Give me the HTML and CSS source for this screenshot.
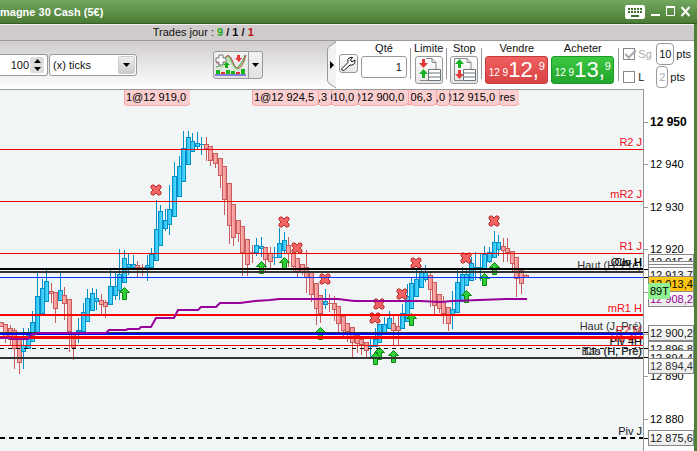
FILE: index.html
```html
<!DOCTYPE html>
<html lang="fr">

<head>
    <meta charset="UTF-8">
    <title>Allemagne 30 Cash (5€)</title>
    <link rel="stylesheet" href="styles.css">
</head>

<body>
    <div class="window">
        <header class="titlebar">
            <h1>magne 30 Cash (5€)</h1>
            <div class="window-buttons">
                <button aria-label="Clavier">
                    <svg width="20" height="14" viewBox="0 0 20 14">
                        <rect width="20" height="14" rx="2" fill="#fff" />
                        <path d="M3 4h14M3 7h14" stroke="#3f6f2c" stroke-width="2" stroke-dasharray="2 1" />
                        <path d="M6 11h8" stroke="#3f6f2c" stroke-width="2" />
                    </svg>
                </button>
                <button aria-label="Réduire">
                    <svg width="9" height="14" viewBox="0 0 9 14"><path d="M0 10h9" stroke="#fff" stroke-width="2" /></svg>
                </button>
                <button aria-label="Agrandir">
                    <svg width="9" height="14" viewBox="0 0 9 14"><path d="M.5 2v8.500h8V2" fill="none" stroke="#fff" /><path d="M0 2h9" stroke="#fff" stroke-width="2" /></svg>
                </button>
                <button aria-label="Fermer">
                    <svg width="9" height="14" viewBox="0 0 9 14"><path d="M.5 2l8 9M8.500 2l-8 9" stroke="#fff" stroke-width="2" /></svg>
                </button>
            </div>
        </header>

        <main class="content">
            <div class="trades">Trades jour : <b><span class="win">9</span> / 1 / <span class="loss">1</span></b></div>

            <div class="toolbar">
                <div class="settings">
                    <div class="spinner">
                        <input type="text" value="100" aria-label="Nombre d'unités">
                        <div class="spin-buttons">
                            <button aria-label="Plus"><svg width="7" height="4" viewBox="0 0 7 4"><path d="M0 4l3.500-4L7 4z" /></svg></button>
                            <button aria-label="Moins"><svg width="7" height="4" viewBox="0 0 7 4"><path d="M0 0h7L3.500 4z" /></svg></button>
                        </div>
                    </div>
                    <div class="unit">
                        <select aria-label="Unité de temps">
                            <option>(x) ticks</option>
                        </select>
                        <span class="unit-arrow"><svg width="7" height="4" viewBox="0 0 7 4"><path d="M0 0h7L3.500 4z" /></svg></span>
                    </div>
                    <div class="indicators">
                        <button class="indicator-add" aria-label="Ajouter un indicateur">
                            <svg width="32" height="22" viewBox="0 0 32 22">
                                <path d="M1 13C5 12 6 10 9 4c3-6 5-1 7 3s4 9 7 6 5-7 8-12v5c-4 7-6 11-9 11s-5-6-8-9-4 5-6 6z" fill="#b9e8b4" />
                                <path d="M1 13c5-1 6-3 9-9 3-5 5 0 7 4s4 8 7 4 5-7 6-11" fill="none" stroke="#3a9c37" />
                                <path d="M1 8c4 5 6 1 8-2s4-7 7-2 4 12 8 10 5-8 7-13" fill="none" stroke="#c8404a" />
                                <path d="M4 1h4v3h3v4H8v3H4V8H1V4h3z" fill="#fff" stroke="#777" />
                                <path d="M12 8l3 3h-2v3h-3v-3H8z" fill="#12b012" />
                                <path d="M22 1h3v3h2l-3 4-4-4h2z" fill="#e83636" />
                                <path d="M1 16h4v4H1zM11 16h4v4h-4zM16 17h4v3h-4zM26 15h4v5h-4z" fill="#15b515" />
                                <path d="M6 18h4v2H6zM21 18h4v2h-4z" fill="#d83434" />
                                <path d="M0 21h31" stroke="#1a1ac8" />
                            </svg>
                        </button>
                        <button class="indicator-menu" aria-label="Liste des indicateurs">
                            <svg width="7" height="4" viewBox="0 0 7 4"><path d="M0 0h7L3.500 4z" /></svg>
                        </button>
                    </div>
                </div>

                <div class="order">
                    <button class="handle" aria-label="Replier">
                        <svg width="9" height="48" viewBox="0 0 9 48">
                            <path d="M9 1L3 5Q.5 6 .5 9v30q0 3 2.500 4L9 47" fill="#f2f2f2" stroke="#999" />
                            <path d="M3 20l4 4-4 4z" />
                        </svg>
                    </button>
                    <button class="tool wrench" aria-label="Réglages">
                        <svg width="15" height="15" viewBox="0 0 15 15">
                            <path d="M1 12.500L7 6.500Q6 3 8 2q2-1 3.500-.5L9.500 4l1.500 2 3-2q.5 3-1.500 4.500-1.500 1-3.500.5L3.500 14Q2 15 1 14t0-1.500z" fill="#fff" stroke="#111" />
                        </svg>
                    </button>
                    <div class="field qty">
                        <label for="qty">Qté</label>
                        <input id="qty" type="text" value="1">
                    </div>
                    <div class="field divided">
                        <label for="limit">Limite</label>
                        <button id="limit" class="tool">
                            <svg width="24" height="24" viewBox="0 0 24 24">
                                <path d="M9 .5h6l4 4V12M15 .5v4h4M3 22.500h8" fill="none" stroke="#888" />
                                <path d="M5 1h3v4h3l-4.500 5L2 5h3z" fill="#e03a3a" />
                                <path d="M6.500 11L11 16H8v4H5v-4H2z" fill="#17b31f" />
                                <path d="M11.500 11.500h12v11h-12zM11 15h13M11 19h13" fill="#fff" stroke="#66757d" />
                            </svg>
                        </button>
                    </div>
                    <div class="field divided">
                        <label for="stop">Stop</label>
                        <button id="stop" class="tool">
                            <svg width="24" height="24" viewBox="0 0 24 24">
                                <path d="M2 .5h13l4 4V12M15 .5v4h4M2.500 0v22.500h9" fill="none" stroke="#888" />
                                <path d="M7.500 1L12 6H9v4H6V6H3z" fill="#17b31f" />
                                <path d="M6 12h3v4h3l-4.500 5L3 16h3z" fill="#e03a3a" />
                                <path d="M11.500 11.500h12v11h-12zM11 15h13M11 19h13" fill="#fff" stroke="#66757d" />
                            </svg>
                        </button>
                    </div>
                    <div class="field divided">
                        <label for="sell">Vendre</label>
                        <button id="sell" class="price sell"><small>12 9</small><b>12,</b><sup>9</sup></button>
                    </div>
                    <div class="field buy-field">
                        <label for="buy">Acheter</label>
                        <button id="buy" class="price buy"><small>12 9</small><b>13,</b><sup>9</sup></button>
                    </div>
                    <div class="stops">
                        <div class="stop-row">
                            <label class="off"><input type="checkbox" checked disabled>Sg</label>
                            <input class="points" type="text" value="10" aria-label="Points Sg">
                            <span>pts</span>
                        </div>
                        <div class="stop-row">
                            <label><input type="checkbox">L</label>
                            <input class="points narrow" type="text" value="2" aria-label="Points L" disabled>
                            <span>pts</span>
                        </div>
                    </div>
                </div>
            </div>

            <div class="chart">
                <svg class="plot" role="img" aria-label="Cours en ticks">
                    <defs>
                        <linearGradient id="up" x2="1" y2="0">
                            <stop offset="0" stop-color="#2cbcf0" />
                            <stop offset="1" stop-color="#4fdcff" />
                        </linearGradient>
                        <linearGradient id="down" x2="1" y2="0">
                            <stop offset="0" stop-color="#ffb0b0" />
                            <stop offset="1" stop-color="#f09090" />
                        </linearGradient>
                        <path id="entry" d="M.5 -5.500L5.500 -.5H2.500V6.500H-1.500V-.5H-4.500z" />
                        <path id="exit" d="M-4 -5H-2L0 -3L2 -5H4L5 -4V-2L3 0L5 2V4L4 5H2L0 3L-2 5H-4L-5 4V2L-3 0L-5 -2V-4z" />
                    </defs>
                    <g id="scene" transform="translate(0 -90)"></g>
                </svg>
                <svg class="axis" role="img" aria-label="Échelle des prix">
                    <defs>
                        <linearGradient id="tag" x2="0" y2="1">
                            <stop offset="0" stop-color="#fff" />
                            <stop offset="1" stop-color="#ececec" />
                        </linearGradient>
                    </defs>
                    <g id="scale" transform="translate(0 -89)"></g>
                </svg>
            </div>
        </main>
    </div>

    <script src="chart.js"></script>
</body>

</html>
```
FILE: styles.css
```css
:root {
    --line: #999;
    --panel: #d0cccc;
    --plot: #f1f5f6;
    --frame: #4c7f37;
}

* {
    margin: 0;
    padding: 0;
    box-sizing: border-box;
}

body {
    height: 100vh;
    overflow: hidden;
    font-family: "Liberation Sans", Arial, sans-serif;
    font-size: 11px;
    color: #111;
}

button,
input,
select {
    font: inherit;
    color: inherit;
}

button {
    display: flex;
    align-items: center;
    justify-content: center;
    border: none;
    background: none;
    cursor: pointer;
}

.window {
    height: 100vh;
    display: flex;
    flex-direction: column;
    background: var(--frame);
}

.titlebar {
    height: 24px;
    flex: none;
    display: flex;
    align-items: center;
    justify-content: space-between;
    padding-right: 7px;
    background: linear-gradient(#72a75f, #4a7b35);
    border-bottom: 1px solid #335a24;
}

.titlebar h1 {
    font-size: 11px;
    color: white;
}

.window-buttons {
    display: flex;
    gap: 6px;
}

.content {
    flex: 1;
    min-height: 0;
    display: flex;
    flex-direction: column;
    margin-right: 3px;
    background: white;
}

.trades {
    flex: none;
    height: 17px;
    line-height: 15px;
    border-top: 1px solid #eee;
    border-bottom: 1px solid var(--line);
    background: var(--panel);
    padding-left: 22%;
    white-space: pre;
}

.win {
    color: #18a818;
}

.loss {
    color: #c01010;
}

.toolbar {
    flex: none;
    height: 48px;
    display: flex;
}

.settings {
    flex: 1;
    display: flex;
    align-items: center;
    background: linear-gradient(var(--panel), #fff);
}

.spinner {
    width: 48px;
    height: 22px;
    display: flex;
    align-items: center;
    padding-right: 3px;
    margin-right: 1px;
    border: 1px solid var(--line);
    border-left: none;
    border-radius: 0 3px 3px 0;
    background: white;
}

.spinner input {
    width: 29px;
    border: none;
    outline: none;
    text-align: right;
    background: none;
}

.spin-buttons {
    margin-left: 1px;
}

.spin-buttons button {
    width: 14px;
    height: 8px;
    border-radius: 2px;
    background: #dcdcdc;
}

.unit {
    position: relative;
    width: 88px;
    height: 22px;
}

.unit select {
    appearance: none;
    width: 100%;
    height: 100%;
    padding-left: 3px;
    border: 1px solid var(--line);
    border-radius: 3px;
    background: white;
}

.unit-arrow {
    position: absolute;
    top: 2px;
    right: 2px;
    bottom: 2px;
    width: 17px;
    display: flex;
    align-items: center;
    justify-content: center;
    border: 1px solid #ccc;
    border-radius: 2px;
    background: linear-gradient(#eee, #ccc);
    pointer-events: none;
}

.indicators {
    display: flex;
    height: 28px;
    margin-left: 76px;
    border: 1px solid var(--line);
    border-radius: 3px;
    background: linear-gradient(#f2f2f2, #e2e2e2);
}

.indicator-add {
    width: 35px;
    border-right: 1px solid var(--line);
}

.indicator-menu {
    width: 13px;
}

.order {
    flex: none;
    display: flex;
    padding-right: 3px;
    background: white;
}

.handle {
    width: 9px;
    background: linear-gradient(var(--panel), #fff);
}

.tool {
    width: 28px;
    height: 28px;
    border: 1px solid var(--line);
    border-radius: 3px;
    background: linear-gradient(#fff, #e6e6e6);
}

.wrench {
    width: 19px;
    height: 19px;
    margin: 13px 3px 0;
}

.field {
    display: flex;
    flex-direction: column;
    align-items: center;
}

.field label {
    height: 15px;
    line-height: 15px;
}

.divided {
    position: relative;
    margin-left: 7px;
}

.divided::before {
    content: "";
    position: absolute;
    left: -4px;
    top: 7px;
    width: 1px;
    height: 31px;
    background: var(--line);
}

.qty input {
    width: 46px;
    height: 22px;
    padding-right: 4px;
    border: 1px solid var(--line);
    border-radius: 3px;
    text-align: right;
}

.price {
    width: 63px;
    height: 28px;
    align-items: flex-end;
    padding-bottom: 3px;
    border-radius: 3px;
    line-height: 20px;
    color: white;
}

.price small {
    font-size: 10px;
    line-height: 14px;
}

.price b {
    font-size: 22px;
    font-weight: normal;
}

.price sup {
    align-self: flex-start;
    font-size: 11px;
    line-height: 18px;
}

.sell {
    border: 1px solid #c33c3c;
    background: linear-gradient(#f06060, #d94343);
}

.buy {
    border: 1px solid #1d9a28;
    background: linear-gradient(#3cc842, #22a52c);
}

.buy-field {
    margin-left: 3px;
}

.stops {
    margin: 1px 0 1px 4px;
    padding-left: 5px;
    background: linear-gradient(var(--line), var(--line)) 0 6px / 1px 33px no-repeat;
}

.stop-row {
    display: flex;
    align-items: center;
    height: 23px;
    gap: 2px;
}

.stop-row label {
    width: 31px;
    display: flex;
    align-items: center;
    gap: 3px;
}

.stop-row .off {
    color: #aaa;
}

.stop-row input[type="checkbox"] {
    appearance: none;
    width: 12px;
    height: 12px;
    border: 1px solid #888;
    background: white;
}

.stop-row input[type="checkbox"]:checked::after {
    content: "";
    display: block;
    width: 9px;
    height: 4px;
    margin: 1px 0 0 1px;
    border: solid #aaa;
    border-width: 0 0 2px 2px;
    transform: rotate(-45deg);
}

.points {
    width: 18px;
    height: 22px;
    border: 1px solid var(--line);
    border-radius: 4px;
    text-align: center;
}

.narrow {
    width: 12px;
}

.points:disabled {
    color: #aaa;
    background: white;
}

.chart {
    flex: 1;
    min-height: 0;
    display: flex;
}

.plot {
    flex: 1;
    min-width: 0;
    height: 100%;
    border-top: 1px solid var(--line);
    border-right: 1px solid var(--line);
    background: var(--plot);
}

.axis {
    flex: none;
    width: 50px;
    height: 100%;
}

.plot rect,
.plot line,
.axis rect {
    shape-rendering: crispEdges;
}

.up-line {
    fill: #008fc8;
}

.down-line {
    fill: #c85c5c;
}

.up-body {
    fill: url(#up);
}

.down-body {
    fill: url(#down);
}

.entry {
    fill: #2fcf3a;
    stroke: #0b860b;
}

.exit {
    fill: #f26464;
    stroke: #b52f2f;
}

.average {
    fill: none;
    stroke: #990099;
    stroke-width: 2;
}

.level-name {
    text-anchor: end;
}

.trade-tag {
    fill: #fbcfcf;
    stroke: #f7a9a9;
}

.major {
    font-size: 12px;
    font-weight: bold;
}
```
FILE: chart.js
```js
const scene = document.getElementById("scene");
const scale = document.getElementById("scale");

// x, high, top, bottom, low, up
const candles = [
    [1, 322, 322, 327, 327, 0], [5, 324, 324, 337, 343, 0], [10, 325, 328, 340, 345, 0],
    [14, 328, 330, 349, 369, 0], [19, 339, 339, 363, 374, 0], [23, 328, 345, 352, 369, 1],
    [28, 328, 335, 349, 349, 1], [32, 311, 322, 342, 342, 1], [37, 273, 296, 333, 333, 1],
    [42, 279, 288, 314, 314, 1], [46, 269, 281, 302, 302, 1], [51, 283, 291, 294, 303, 0],
    [55, 292, 292, 309, 323, 0], [60, 273, 290, 301, 301, 1], [64, 287, 295, 304, 320, 0],
    [69, 299, 299, 332, 352, 0], [73, 332, 332, 348, 360, 0], [78, 318, 330, 332, 343, 1],
    [83, 303, 312, 332, 332, 1], [87, 289, 298, 322, 322, 1], [92, 288, 293, 311, 311, 1],
    [96, 289, 298, 302, 310, 1], [101, 294, 300, 305, 314, 0], [105, 300, 302, 307, 318, 0],
    [110, 269, 286, 305, 305, 1], [115, 273, 286, 296, 300, 1], [119, 249, 274, 291, 300, 1],
    [124, 250, 258, 283, 283, 1], [128, 254, 264, 268, 275, 1], [133, 255, 264, 268, 268, 1],
    [137, 261, 265, 268, 277, 0], [142, 264, 267, 268, 276, 0], [147, 255, 265, 268, 281, 1],
    [151, 248, 254, 268, 268, 1], [156, 200, 229, 261, 261, 1], [160, 205, 211, 246, 246, 1],
    [165, 209, 220, 229, 231, 1], [169, 185, 209, 225, 235, 1], [174, 162, 176, 217, 217, 1],
    [179, 156, 166, 197, 197, 1], [183, 131, 148, 182, 182, 1], [188, 131, 137, 165, 165, 1],
    [192, 133, 141, 152, 152, 1], [197, 132, 143, 147, 149, 1], [201, 137, 144, 145, 155, 1],
    [206, 137, 144, 149, 161, 0], [210, 146, 146, 161, 166, 0], [215, 153, 153, 164, 168, 0],
    [220, 158, 158, 176, 188, 0], [224, 166, 166, 200, 215, 0], [229, 183, 183, 226, 244, 0],
    [233, 204, 204, 238, 246, 0], [238, 220, 220, 234, 242, 0], [242, 226, 226, 253, 276, 0],
    [247, 239, 239, 265, 276, 0], [252, 245, 252, 253, 263, 0], [256, 238, 245, 253, 256, 1],
    [261, 237, 246, 249, 257, 1], [265, 247, 247, 260, 272, 0], [270, 247, 253, 262, 270, 0],
    [274, 247, 257, 258, 265, 1], [279, 228, 243, 258, 258, 1], [284, 232, 240, 251, 253, 1],
    [288, 237, 245, 254, 267, 0], [293, 253, 253, 267, 271, 0], [297, 258, 258, 272, 277, 0],
    [302, 264, 264, 272, 275, 0], [306, 250, 267, 278, 293, 0], [311, 272, 272, 295, 302, 0],
    [316, 283, 283, 309, 325, 0], [320, 295, 295, 314, 323, 0], [325, 289, 301, 305, 309, 1],
    [329, 294, 303, 304, 312, 0], [334, 296, 303, 310, 321, 0], [338, 306, 306, 324, 332, 0],
    [343, 316, 316, 331, 336, 0], [347, 323, 323, 332, 342, 0], [352, 327, 327, 343, 358, 0],
    [357, 335, 335, 344, 353, 0], [361, 339, 339, 345, 355, 0], [366, 342, 342, 351, 357, 0],
    [370, 339, 346, 347, 357, 1], [375, 328, 339, 347, 347, 1], [379, 324, 324, 343, 343, 1],
    [384, 317, 324, 333, 335, 1], [389, 311, 318, 329, 329, 1], [393, 316, 323, 331, 345, 0],
    [398, 315, 326, 331, 345, 0], [402, 304, 313, 329, 329, 1], [407, 284, 296, 322, 322, 1],
    [411, 278, 283, 309, 309, 1], [416, 270, 279, 297, 297, 1], [421, 268, 272, 288, 288, 1],
    [425, 265, 272, 280, 282, 1], [430, 272, 275, 290, 307, 0], [434, 282, 282, 306, 314, 0],
    [439, 294, 294, 309, 313, 0], [443, 296, 301, 314, 324, 0], [448, 307, 307, 324, 331, 0],
    [452, 291, 309, 316, 329, 1], [457, 270, 282, 313, 313, 1], [462, 267, 274, 302, 302, 1],
    [466, 270, 274, 286, 286, 1], [471, 257, 263, 281, 281, 1], [475, 252, 267, 268, 280, 1],
    [480, 253, 267, 268, 281, 1], [484, 246, 254, 269, 269, 1], [489, 247, 252, 262, 263, 1],
    [494, 231, 242, 258, 258, 1], [498, 235, 242, 250, 256, 1], [503, 238, 246, 251, 262, 0],
    [507, 238, 248, 253, 262, 0], [512, 251, 251, 264, 271, 0], [516, 257, 257, 279, 297, 0],
    [521, 270, 270, 284, 294, 0], [526, 274, 275, 278, 278, 0]
];

const entries = [
    [124, 293], [261, 267], [284, 263], [320, 333], [379, 353], [375, 358], [393, 356],
    [411, 319], [466, 296], [484, 279], [494, 268]
];

const exits = [
    [156, 190], [284, 222], [297, 248], [325, 279], [375, 318], [379, 304], [402, 294],
    [416, 263], [466, 258], [494, 221]
];

// y, thickness, colour, dash
const levels = [
    [149, 1, "#f00000"], [201, 1, "#f00000"], [253, 1, "#f00000"],
    [268, 2, "#000"], [271, 2, "#333"], [277, 1, "#0030ff"],
    [314, 2, "#f00"], [332, 1, "#333"], [333, 2, "#00f"], [336, 3, "#f00"],
    [345, 1, "#f00000"], [348, 1, "#000", "4 4"], [357, 2, "#333"], [437, 2, "#000", "5 4"]
];

// name, baseline, colour
const names = [
    ["R2 J", 146, "#f01020"], ["mR2 J", 198, "#f01020"], ["R1 J", 250, "#f01020"],
    ["Haut (H, Pré)", 269, "#333"], ["Clo H", 266, "#000"], ["Ouv H", 266, "#000"],
    ["mR1 H", 312, "#f01020"], ["R2 M", 334, "#f01020"], ["R1 4H", 342, "#f01020"],
    ["Haut (J, Pré)", 330, "#333"], ["Piv 4H", 345, "#000"], ["Bas (H, Pré)", 355, "#333"],
    ["Clo (H, Pré)", 355, "#333"], ["Piv J", 435, "#112"]
];

// text, left edge, width
const trades = [
    ["1@12 919,0", 124, 66], ["1@12 924,5", 252, 66], ["1@12 906,3", 318, 13],
    ["1@12 910,0", 331, 27], ["1@12 900,0", 358, 50], ["", 408, 3], ["1@12 906,3", 411, 25],
    ["1@12 912,0", 436, 13], ["1@12 915,0", 449, 50], ["Ordres", 499, 20]
];

// text, top of box, text colour, fill
const tags = [
    ["12 915,4", 254], ["", 261], ["", 264], ["12 913,7", 267],
    ["12 908,2", 291, "#909"], ["12 913,4", 276, "#000", "#fcc612"],
    ["12 896,8", 341], ["12 900,2", 325], ["12 894,4", 350], ["12 894,4", 358, "#333"],
    ["12 875,6", 430]
];

function draw(parent, name, attrs, text) {
    const el = document.createElementNS("http://www.w3.org/2000/svg", name);
    for (const key in attrs) {
        el.setAttribute(key, attrs[key]);
    }
    if (text) el.textContent = text;
    parent.appendChild(el);
    return el;
}

candles.forEach(([x, high, top, bottom, low, up]) => {
    const dir = up ? "up" : "down";
    draw(scene, "rect", { class: dir + "-line", x, y: high, width: 1, height: low - high });
    draw(scene, "rect", { class: dir + "-line", x: x - 2, y: top, width: 5, height: bottom - top });
    if (bottom - top > 2) {
        draw(scene, "rect", { class: dir + "-body", x: x - 1, y: top + 1, width: 3, height: bottom - top - 2 });
    }
});

entries.forEach(([x, y]) => draw(scene, "use", { href: "#entry", class: "entry", x, y }));
exits.forEach(([x, y]) => draw(scene, "use", { href: "#exit", class: "exit", x, y }));

names.forEach(([name, y, fill]) => {
    draw(scene, "text", { class: "level-name", x: "100%", dx: -1, y, fill }, name);
});

levels.forEach(([y, size, colour, dash]) => {
    if (dash) {
        // dashes are stroked from the middle of the band
        draw(scene, "line", { x1: 0, x2: "100%", y1: y + size / 2, y2: y + size / 2, stroke: colour, "stroke-width": size, "stroke-dasharray": dash });
    } else {
        draw(scene, "rect", { x: 0, y, width: "100%", height: size, fill: colour });
    }
});

draw(scene, "polyline", {
    class: "average",
    points: "0,338 11,338 11,339 28,339 31,335 38,333 106,333 109,330 126,330 128,329 139,329 141,327 151,327 156,318 174,318 178,310 198,310 201,307 216,307 220,303 240,303 255,301 270,300 279,299 338,299 354,301 380,301 420,301 441,302 452,301 479,300 506,299 527,299"
});

trades.forEach(([text, x, width]) => {
    const box = draw(scene, "svg", { x, y: 89, width, height: 17 });
    draw(box, "rect", { class: "trade-tag", x: 0, y: -4, width, height: 20, rx: 2 });
    draw(box, "text", { class: "level-name", x: width - 4, y: 12 }, text);
});

for (let i = 0; i < 8; i++) {
    const price = 12950 - i * 10;
    const y = 122 + Math.round(i * 42.4);
    draw(scale, "rect", { x: 0, y, width: 4, height: 1, fill: "#999" });
    draw(scale, "text", { class: price % 50 ? "" : "major", x: 6, y: y + 4 }, "12 " + (price - 12000));
}

[269, 277, 332, 348, 357, 438].forEach(y => draw(scale, "rect", { x: 0, y, width: 4, height: 1 }));

tags.forEach(([text, y, colour = "#111", fill = "url(#tag)"]) => {
    draw(scale, "rect", { x: 4, y, width: 45, height: 15, fill, stroke: "#888" });
    draw(scale, "text", { x: 6, y: y + 12, fill: colour }, text);
});

draw(scale, "rect", { x: 4, y: 283, width: 22, height: 16, rx: 2, fill: "#92f292" });
draw(scale, "text", { x: 6, y: 295 }, "89T");
```
